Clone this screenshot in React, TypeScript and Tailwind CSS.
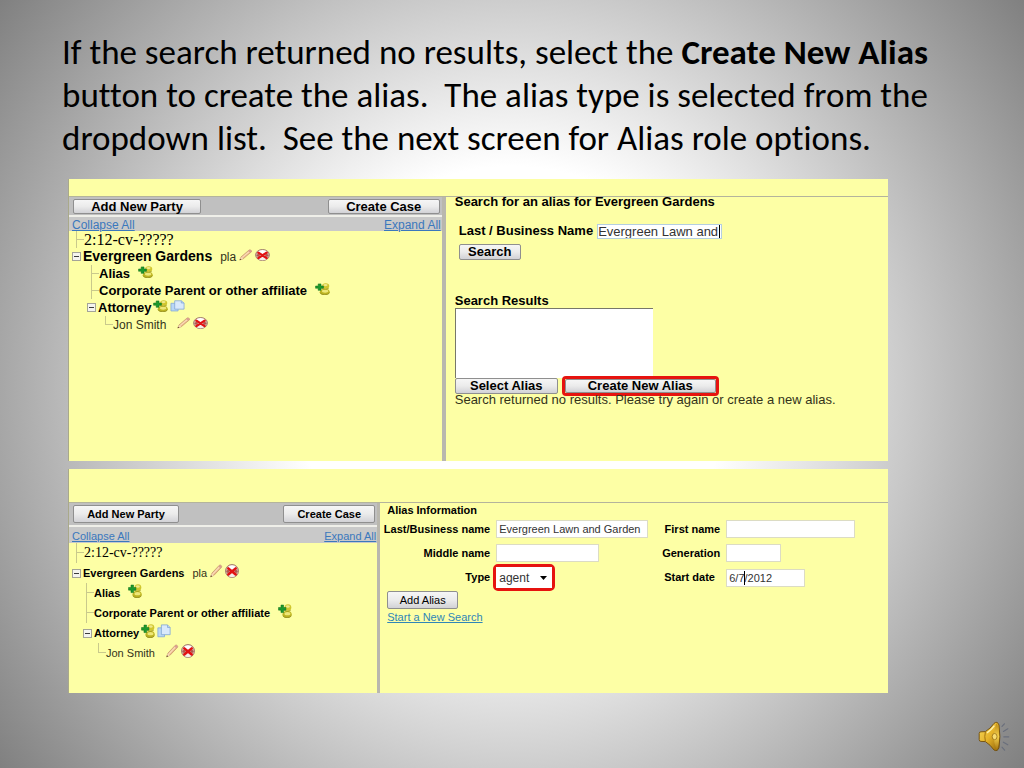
import type { ReactNode } from "react";

type Size = "short" | "tall";

const iconSize: Record<Size, string> = {
  short: "mb-1 h-3 w-[15px] shrink-0",
  tall: "mb-1 h-[14px] w-[14px] shrink-0",
};

function PencilIcon({ size }: { size: Size }) {
  return (
    <svg className={iconSize[size]} viewBox="0 0 16 16" preserveAspectRatio="none" aria-hidden="true">
      <path d="M2 14.5 3.2 10.6 11.6 1.6Q12.6.6 13.8 1.6 15 2.6 14.2 3.9L5.6 13Z" fill="#eeb98c" stroke="#b98a62" strokeWidth=".7" />
      <path d="M4.4 11.4 12.6 2.8" stroke="#fbe0bd" strokeWidth="1.2" />
      <path d="M11.6 1.6Q12.6.6 13.8 1.6 15 2.6 14.2 3.9L13.2 5 10.6 2.7Z" fill="#d9a090" />
      <path d="M2 14.5 3.2 10.6 5.6 13Z" fill="#f6dfb8" />
      <path d="M1.6 15 2.3 12.9 3.7 14.1Z" fill="#5b3a22" />
    </svg>
  );
}

function DeleteIcon({ size }: { size: Size }) {
  return (
    <svg className={iconSize[size]} viewBox="0 0 16 16" preserveAspectRatio="none" aria-hidden="true">
      <circle cx="8" cy="8" r="7.4" fill="#dcb0a6" stroke="#8d6a60" strokeWidth=".9" />
      <path d="M2.6 4Q8-1.4 13.4 4L10.4 5.4 8 7.2 5.6 5.4Z" fill="#ffffff" />
      <path d="M3.4 13.4 8 10 12.6 13.4Q8 16.6 3.4 13.4Z" fill="#f6eeea" />
      <path d="M1.2 8.4 3.6 6.4 5.4 8.4 3.4 10.6Z M14.8 8.4 12.4 6.4 10.6 8.4 12.6 10.6Z" fill="#b0584c" />
      <path d="M3.8 5 12.2 12M12.2 5 3.8 12" stroke="#e21212" strokeWidth="2.9" strokeLinecap="round" />
    </svg>
  );
}

function AddPartyIcon({ size }: { size: Size }) {
  return (
    <svg className={iconSize[size]} viewBox="0 0 16 16" preserveAspectRatio="none" aria-hidden="true">
      <circle cx="11.4" cy="4" r="3.8" fill="#d0c62e" />
      <ellipse cx="11.2" cy="2.8" rx="2.2" ry="1.4" fill="#efe98a" />
      <path d="M5 12.2Q5.4 8.2 10.2 7.6 15.6 7.6 15.8 12.2 15 15.8 10.4 15.8 5.4 15.8 5 12.2Z" fill="#bdb422" />
      <path d="M7 7.2Q11 9.4 14.6 7.2" fill="none" stroke="#968f18" strokeWidth=".8" />
      <path d="M5.6 13.4Q7 15.8 10.4 15.6 14.2 15.6 15.2 13.6" fill="none" stroke="#86801a" strokeWidth=".8" />
      <ellipse cx="10.8" cy="11" rx="3.4" ry="1.9" fill="#eee778" />
      <path d="M3.4 1.2H6.4V4H9V7H6.4V9.8H3.4V7H.6V4H3.4Z" fill="#1c9a2c" stroke="#0f6d1d" strokeWidth=".6" />
    </svg>
  );
}

function CopyIcon({ size }: { size: Size }) {
  return (
    <svg className={iconSize[size]} viewBox="0 0 16 16" preserveAspectRatio="none" aria-hidden="true">
      <path d="M1 4.4H8.6V14.6H1Z" fill="#b9d7f5" stroke="#7fa6d8" strokeWidth=".9" />
      <path d="M5 1H12L15 4V12.2H5Z" fill="#d9e9fb" stroke="#7fa4d4" strokeWidth=".9" />
      <path d="M12 1V4H15" fill="#b7d2f0" stroke="#7fa4d4" strokeWidth=".8" />
    </svg>
  );
}

function CollapseBox() {
  return (
    <svg className="h-[9px] w-[9px] shrink-0" viewBox="0 0 9 9" aria-hidden="true">
      <rect x=".5" y=".5" width="8" height="8" fill="#f4f4ee" stroke="#a4a498" />
      <path d="M2 4.5H7" stroke="#3c3c3c" />
    </svg>
  );
}

function Branch({ last = false }: { last?: boolean }) {
  return (
    <span className={last ? "flex h-full w-2 flex-col" : "flex h-full w-2 flex-col border-l border-[#c9c98c]"}>
      <span className={last ? "h-1/2 border-b border-l border-[#c9c98c]" : "h-1/2 border-b border-[#c9c98c]"} />
    </span>
  );
}

const buttonBase =
  "rounded-[2px] border border-[#8f8f8f] bg-linear-to-b from-[#f6f6f6] via-[#ebebeb] to-[#d2d2d6] text-center text-black whitespace-nowrap";

function Tree({ size }: { size: Size }) {
  const short = size === "short";
  const row = short ? "flex h-[17px] items-center" : "flex h-5 items-center";
  const branchPad = short ? "flex h-full pl-[22px]" : "flex h-full pl-[17px]";
  const leafPad = short ? "flex h-full pl-9" : "flex h-full pl-[29px]";
  const name = short ? "text-[14px] font-bold" : "text-[11px] font-bold";
  const item = short ? "text-[13px] font-bold" : "text-[11px] font-bold";
  const plain = short ? "text-[12px] text-[#33331a]" : "text-[11px] text-[#33331a]";
  const docket = short
    ? "font-['Liberation_Serif',serif] text-[16px] leading-4"
    : "font-['Liberation_Serif',serif] text-[14px] leading-4";
  return (
    <ul className="whitespace-nowrap">
      <li className={row}>
        <span className="flex h-full pl-[7px]">
          <Branch />
        </span>
        <span className={docket}>2:12-cv-?????</span>
      </li>
      <li className={`${row} gap-[2px] pl-[3px]`}>
        <CollapseBox />
        <span className={name}>Evergreen Gardens</span>
        <span className={`${plain} pl-[6px]`}>pla</span>
        <PencilIcon size={size} />
        <DeleteIcon size={size} />
      </li>
      <li className={row}>
        <span className={branchPad}>
          <Branch />
        </span>
        <span className={`${item} pr-2`}>Alias</span>
        <AddPartyIcon size={size} />
      </li>
      <li className={row}>
        <span className={branchPad}>
          <Branch />
        </span>
        <span className={`${item} pr-2`}>Corporate Parent or other affiliate</span>
        <AddPartyIcon size={size} />
      </li>
      <li className={short ? `${row} gap-[2px] pl-[18px]` : `${row} gap-[2px] pl-[14px]`}>
        <CollapseBox />
        <span className={item}>Attorney</span>
        <AddPartyIcon size={size} />
        <CopyIcon size={size} />
      </li>
      <li className={`${row} gap-[2px]`}>
        <span className="flex h-full items-center">
          <span className={leafPad}>
            <Branch last />
          </span>
          <span className={`${plain} pr-2`}>Jon Smith</span>
        </span>
        <PencilIcon size={size} />
        <DeleteIcon size={size} />
      </li>
    </ul>
  );
}

function PartyPane({ size }: { size: Size }) {
  const short = size === "short";
  const button = short ? "h-[15px] text-[13px] leading-[13px]" : "h-[18px] text-[11px] leading-4";
  return (
    <section
      className={
        short
          ? "w-[46%] shrink-0 border-r-4 border-[#b9b7ae]"
          : "w-[38%] shrink-0 border-r-[3px] border-[#b9b7ae]"
      }
    >
      <div
        className={
          short
            ? "flex h-[18px] items-center justify-between bg-[#c0c0c0] pl-1 pr-[2px]"
            : "flex h-[22px] items-center justify-between bg-[#c0c0c0] pl-1 pr-[2px]"
        }
      >
        <button type="button" className={`${buttonBase} ${button} font-bold ${short ? "w-32" : "w-[106px]"}`}>
          Add New Party
        </button>
        <button type="button" className={`${buttonBase} ${button} font-bold ${short ? "w-28" : "w-[92px]"}`}>
          Create Case
        </button>
      </div>
      <div
        className={
          short
            ? "flex h-4 items-end justify-between border-t-2 border-[#efefe9] bg-[#c9c9c9] pl-[3px] pr-px text-[12px] leading-3 text-[#3b78bd]"
            : "flex h-[18px] items-end justify-between border-t-2 border-[#efefe9] bg-[#c9c9c9] pl-[3px] pr-px text-[11px] leading-[14px] text-[#3b78bd]"
        }
      >
        <a href="#collapse" className="underline">Collapse All</a>
        <a href="#expand" className="underline">Expand All</a>
      </div>
      <Tree size={size} />
    </section>
  );
}

function Panel({ strip, children }: { strip: string; children: ReactNode }) {
  return (
    <div className="flex flex-col border-l border-[#a9a98a] bg-[#fdffa5]">
      <div className={strip} />
      <div className="flex flex-1 border-t border-[#b4b49c]">{children}</div>
    </div>
  );
}

function SearchPane() {
  return (
    <section className="min-w-0 flex-1 pl-[9px] text-[13px]">
      <h2 className="font-bold leading-[10px]">Search for an alias for Evergreen Gardens</h2>
      <div className="mt-[17px] flex h-[14px] items-center gap-1 pl-1">
        <label htmlFor="business" className="font-bold">Last / Business Name</label>
        <span className="relative">
          <input
            id="business"
            defaultValue="Evergreen Lawn and"
            className="block h-[15px] w-[125px] border border-[#b5cfe0] bg-white leading-[13px] text-[#333]"
          />
          <span className="absolute bottom-px right-[2px] top-px w-px bg-black" />
        </span>
      </div>
      <div className="pl-1 pt-[6px]">
        <button type="button" className={`${buttonBase} block h-4 w-[62px] font-bold leading-[14px]`}>Search</button>
      </div>
      <label htmlFor="results" className="block pt-[34px] font-bold leading-[14px]">Search Results</label>
      <select id="results" size={4} className="block h-[70px] w-[198px] appearance-none overflow-hidden border-l border-t border-[#77776a] bg-white" />
      <div className="flex h-[15px] items-center gap-1">
        <button type="button" className={`${buttonBase} h-4 w-[103px] font-bold leading-[14px]`}>Select Alias</button>
        <span className="rounded-[4px] border-[3px] border-[#e6130f]">
          <button type="button" className={`${buttonBase} block h-[14px] w-[151px] font-bold leading-3`}>
            Create New Alias
          </button>
        </span>
      </div>
      <p className="leading-[14px] text-[#33331a]">
        Search returned no results. Please try again or create a new alias.
      </p>
    </section>
  );
}

const field = "block h-[18px] border border-[#dcdcc4] bg-white px-[2px] text-[11px] leading-4 text-[#333]";

function AliasPane() {
  return (
    <section className="min-w-0 flex-1 pl-[7px] text-[11px]">
      <h2 className="font-bold leading-[14px]">Alias Information</h2>
      <div className="grid grid-cols-[103px_162px_56px_1fr] grid-rows-[24px_24px_25px] items-center gap-x-[6px] font-bold whitespace-nowrap">
        <label htmlFor="last" className="justify-self-end">Last/Business name</label>
        <input id="last" defaultValue="Evergreen Lawn and Garden" className={`${field} w-[152px] font-normal`} />
        <label htmlFor="first" className="justify-self-end">First name</label>
        <input id="first" className={`${field} w-[129px] font-normal`} />

        <label htmlFor="middle" className="justify-self-end">Middle name</label>
        <input id="middle" className={`${field} w-[103px] font-normal`} />
        <label htmlFor="generation" className="justify-self-end">Generation</label>
        <input id="generation" className={`${field} w-[55px] font-normal`} />

        <label htmlFor="type" className="justify-self-end">Type</label>
        <span className="relative -ml-[3px] w-[62px] rounded-[5px] border-[3px] border-[#e6130f]">
          <select id="type" defaultValue="agent" className="block h-[21px] w-full appearance-none bg-white pl-[3px] text-[12px] font-normal text-[#333]">
            <option value="agent">agent</option>
          </select>
          <svg className="pointer-events-none absolute right-[5px] top-[9px] h-1 w-[7px]" viewBox="0 0 7 4" aria-hidden="true">
            <path d="M0 0H7L3.5 4Z" fill="#000" />
          </svg>
        </span>
        <label htmlFor="start">Start date</label>
        <span className="relative">
          <input id="start" defaultValue="6/7/2012" className={`${field} w-[79px] font-normal`} />
          <span className="absolute bottom-[2px] left-[18px] top-[2px] w-px bg-black" />
        </span>
      </div>
      <button type="button" className={`${buttonBase} mt-px block h-[18px] w-[71px] leading-4`}>Add Alias</button>
      <a href="#search" className="mt-px block w-fit leading-[14px] text-[#2f86b8] underline">Start a New Search</a>
    </section>
  );
}

function SpeakerIcon() {
  return (
    <svg className="h-8 w-8" viewBox="0 0 32 32" role="img" aria-label="Audio">
      <defs>
        <linearGradient id="cone" x1="0" y1="0" x2="1" y2="1">
          <stop offset="0" stopColor="#f6d95c" />
          <stop offset=".5" stopColor="#e5b32a" />
          <stop offset="1" stopColor="#8f6208" />
        </linearGradient>
        <linearGradient id="rim" x1="0" y1="0" x2="0" y2="1">
          <stop offset="0" stopColor="#c08d18" />
          <stop offset=".5" stopColor="#f3cf4c" />
          <stop offset="1" stopColor="#a87710" />
        </linearGradient>
      </defs>
      <path d="M1.2 12.4Q1.2 10.8 3 10.8L7.4 10.6Q12.6 7.4 16 2.4 19.4-.4 21 4 22.8 15.6 21 26.6 19.6 31 16 29 12.6 24 7.4 20.6L3 20.4Q1.2 20.4 1.2 18.6Z" fill="url(#cone)" stroke="#6f4d0c" strokeWidth=".9" />
      <path d="M7.4 10.8Q6.2 15.6 7.4 20.4" fill="none" stroke="#a0720f" />
      <path d="M9 11.8Q13.4 8.8 16.4 4.6" stroke="#fff2ae" strokeWidth="1.4" fill="none" />
      <path d="M18.4 2.6Q15.8 9 15.8 15.6T18.4 28.6Q20.6 28 21.2 15.6 20.6 3.4 18.4 2.6Z" fill="url(#rim)" />
      <ellipse cx="16.6" cy="15.6" rx="2.4" ry="3.1" fill="#f8dc72" stroke="#8b6410" strokeWidth=".7" />
      <path d="M24 5.4 26.4 2.8M25.4 10.4 29.8 7.8M25.8 15.8H30.8M25.4 21.2 29.8 23.8M24 26.2 26.6 29.2" stroke="#6a6f7c" strokeWidth="1.2" strokeLinecap="round" fill="none" />
    </svg>
  );
}

export default function App() {
  return (
    <main className="flex min-h-screen flex-col bg-[radial-gradient(circle_farthest-corner_at_center,#ffffff_0%,#ffffff_34%,#808080_100%)] font-['Liberation_Sans',Arial,sans-serif] text-black">
      <h1 className="pl-[62px] pt-[31px] font-['Carlito','Calibri','Lato',sans-serif] text-[35px] leading-[43px] whitespace-pre [font-variant-ligatures:none]">
        If the search returned no results, select the <strong className="font-bold">Create New Alias</strong>
        <br />
        {"button to create the alias.  The alias type is selected from the"}
        <br />
        {"dropdown list.  See the next screen for Alias role options."}
      </h1>
      <div className="flex flex-col gap-2 pl-[68px] pr-[136px] pt-[19px]">
        <div className="grid min-h-[282px]">
          <Panel strip="h-[17px]">
            <PartyPane size="short" />
            <SearchPane />
          </Panel>
        </div>
        <div className="grid min-h-[224px]">
          <Panel strip="h-[33px]">
            <PartyPane size="tall" />
            <AliasPane />
          </Panel>
        </div>
      </div>
      <footer className="mt-auto flex justify-end pb-[15px] pr-[14px]">
        <SpeakerIcon />
      </footer>
    </main>
  );
}
